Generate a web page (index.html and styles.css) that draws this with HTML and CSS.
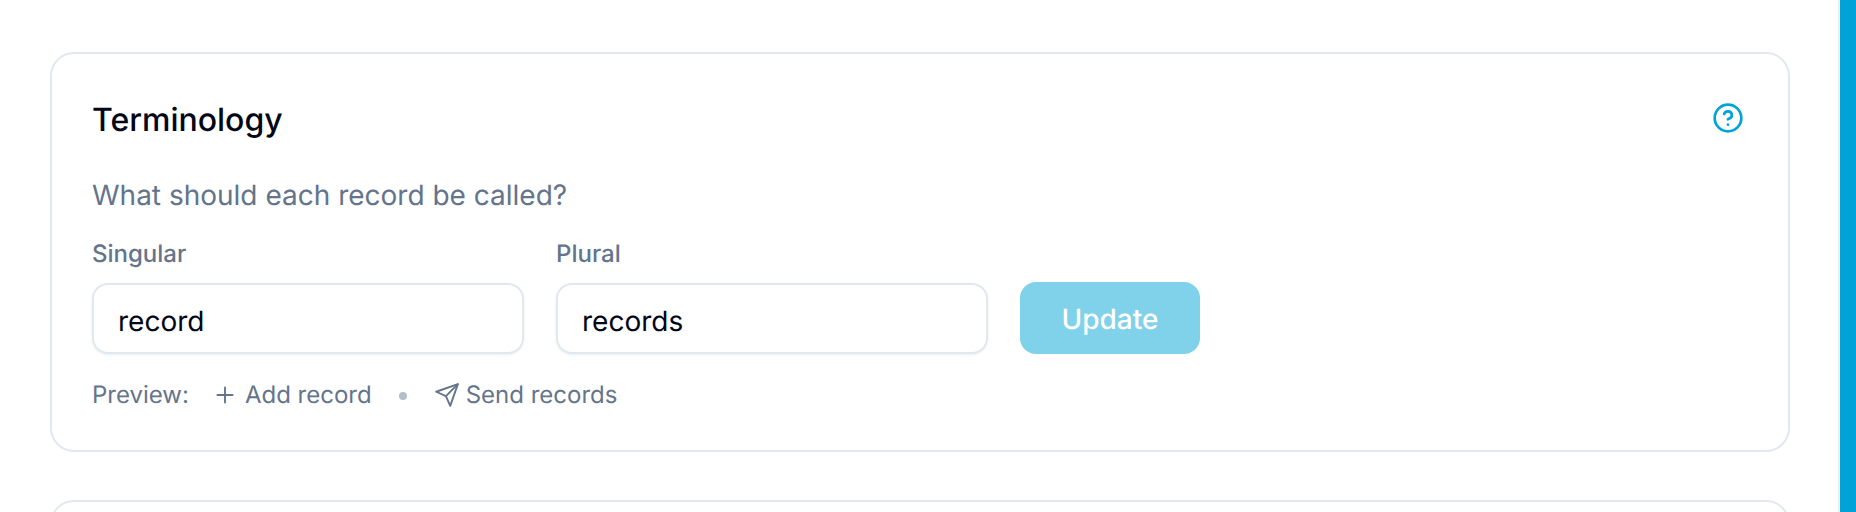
FILE: index.html
```html
<!DOCTYPE html>
<html lang="en">
<head>
<meta charset="utf-8">
<title>Terminology</title>
<link rel="stylesheet" href="styles.css">
</head>
<body>
<div class="page">
  <main class="content">
    <section class="card">
      <header class="card-head">
        <h2 class="title">Terminology</h2>
        <svg class="help" viewBox="0 0 24 24" fill="none" stroke="currentColor" stroke-width="2" stroke-linecap="round" stroke-linejoin="round" aria-hidden="true">
          <circle cx="12" cy="12" r="10"/>
          <path d="M9.09 9a3 3 0 0 1 5.83 1c0 2-3 3-3 3"/>
          <path d="M12 17h.01"/>
        </svg>
      </header>
      <p class="question">What should each record be called?</p>
      <form class="fields">
        <label class="field">
          <span class="field-label">Singular</span>
          <input class="input" type="text" value="record">
        </label>
        <label class="field">
          <span class="field-label">Plural</span>
          <input class="input" type="text" value="records">
        </label>
        <button class="update" type="button">Update</button>
      </form>
      <div class="preview">
        <span class="preview-label">Preview:</span>
        <span class="preview-item add">
          <svg class="icon" viewBox="0 0 24 24" fill="none" stroke="currentColor" stroke-width="1.75" stroke-linecap="round" stroke-linejoin="round" aria-hidden="true"><path d="M5 12h14"/><path d="M12 5v14"/></svg>
          Add record
        </span>
        <span class="dot"></span>
        <span class="preview-item send">
          <svg class="icon" viewBox="0 0 24 24" fill="none" stroke="currentColor" stroke-width="1.75" stroke-linecap="round" stroke-linejoin="round" aria-hidden="true"><path d="m22 2-7 20-4-9-9-4Z"/><path d="M22 2 11 13"/></svg>
          Send records
        </span>
      </div>
    </section>
    <section class="card next"></section>
  </main>
  <aside class="rail"></aside>
</div>
</body>
</html>
```
FILE: styles.css
```css
* { box-sizing: border-box; }
html, body { margin: 0; height: 100%; }
body {
  background: #fff;
  font-family: Inter, "Liberation Sans", sans-serif;
  text-rendering: geometricPrecision;
  overflow: hidden;
}
.page { display: flex; height: 512px; overflow: hidden; }
.content {
  flex: 1;
  padding: 52px 48px 0 50px;
  display: flex;
  flex-direction: column;
  gap: 48px;
  min-width: 0;
}
.rail {
  width: 18px;
  flex: none;
  background: #00a3d7;
  border-left: 2px solid #efefef;
}
.card {
  flex: none;
  height: 400px;
  background: #fff;
  border: 2px solid #e2e8f0;
  border-radius: 24px;
  padding: 42px 40px 0;
}
.next { height: 200px; }
.card-head {
  display: flex;
  align-items: center;
  justify-content: space-between;
  height: 48px;
  padding-right: 4px;
}
.title {
  margin: 0;
  font-size: 32px;
  font-weight: 500;
  line-height: 48px;
  color: #020617;
}
.help { width: 32px; height: 32px; margin-bottom: 4px; color: #00a3d7; }
.question {
  margin: 33px 0 0;
  font-size: 28px;
  line-height: 36px;
  color: #64748b;
}
.fields {
  display: flex;
  align-items: flex-end;
  gap: 32px;
  margin-top: 25px;
}
.field { display: flex; flex-direction: column; width: 432px; gap: 13px; }
.field-label {
  font-size: 24px;
  font-weight: 500;
  line-height: 32px;
  color: #64748b;
}
.input {
  width: 100%;
  height: 71px;
  padding: 4px 24px 0;
  border: 2px solid #e2e8f0;
  border-radius: 16px;
  background: #fff;
  box-shadow: 0 1px 3px rgba(15, 23, 42, .08);
  font: 400 28px Inter, sans-serif;
  text-rendering: geometricPrecision;
  color: #020617;
  outline: none;
}
.update {
  width: 180px;
  height: 72px;
  padding: 2px 0 0;
  border: 0;
  border-radius: 16px;
  background: #80d1ea;
  color: #fff;
  font: 500 28px Inter, sans-serif;
  text-rendering: geometricPrecision;
}
.preview {
  display: flex;
  align-items: center;
  margin-top: 23px;
  font-size: 24px;
  line-height: 36px;
  color: #64748b;
}
.preview-item { display: flex; align-items: center; }
.add { margin-left: 23px; gap: 7px; }
.send { gap: 6px; }
.icon { width: 26px; height: 26px; flex: none; }
.dot {
  width: 8px;
  height: 8px;
  margin: 2px 27px 0 27px;
  border-radius: 50%;
  background: #b4bfce;
}
```
